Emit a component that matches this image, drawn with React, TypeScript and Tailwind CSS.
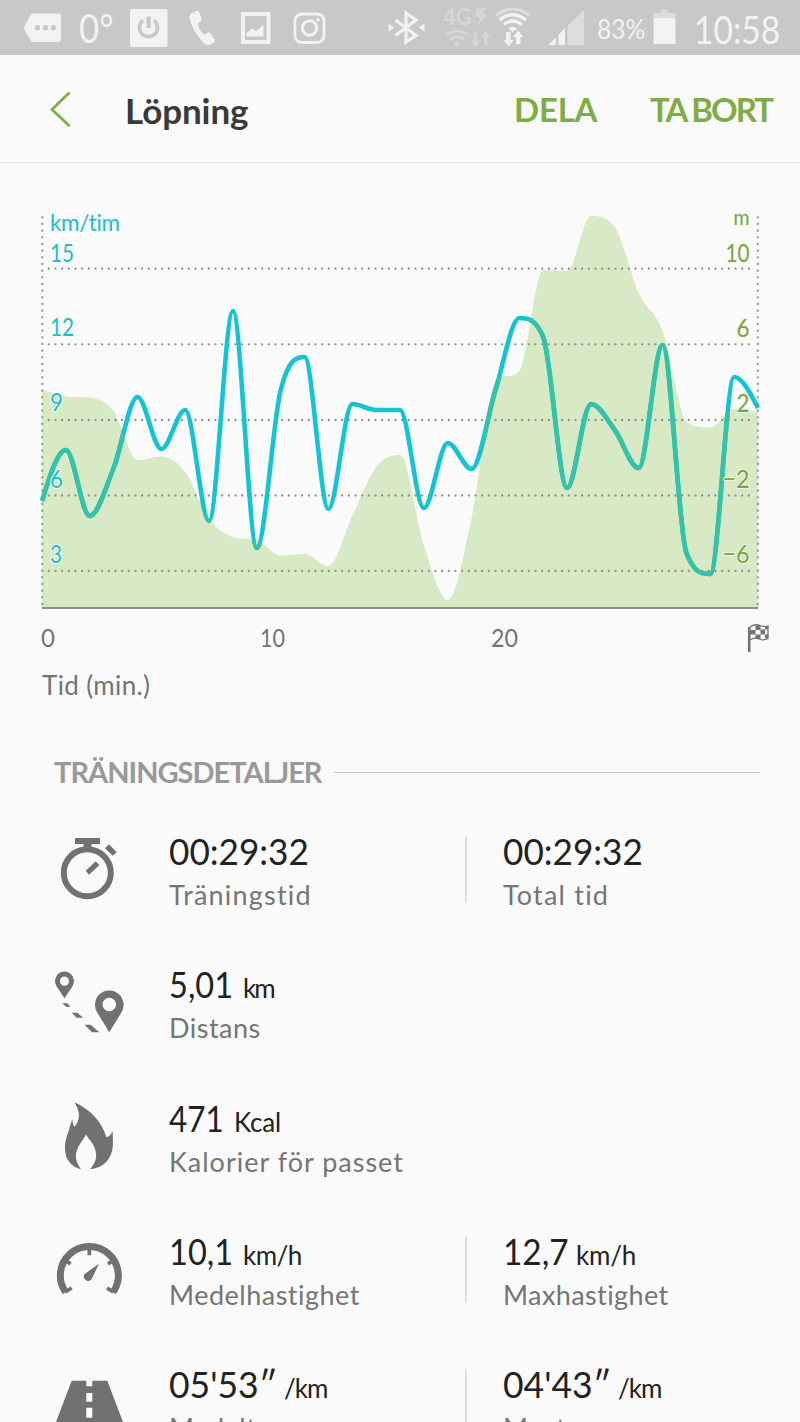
import type { ReactNode } from "react";

const STEP = 716 / 30;

// y positions, one sample per minute of the workout
const speed = [
  501, 450, 516, 468, 397, 449, 410, 521, 311, 548, 390, 357, 509, 404, 410, 410, 508, 443, 469, 390, 318, 337, 488,
  404, 430, 468, 345, 553, 574, 377, 408,
];
const elevation = [
  389, 396.5, 397.5, 411, 460, 456.5, 472, 519, 537, 540, 555.5, 554, 566, 516, 467, 455, 545, 600, 518, 381, 371,
  270, 271, 216, 227, 293, 331, 421, 427.5, 409, 412,
];

function smoothPath(ys: number[]) {
  const n = ys.length;
  const x = (i: number) => 42 + i * STEP;
  const s = ys.slice(1).map((y, i) => (y - ys[i]) / STEP);
  const t = ys.map((_, i) => {
    if (i === 0 || i === n - 1) return 0;
    const a = s[i - 1];
    const b = s[i];
    if (a * b <= 0) return 0;
    return Math.sign(a) * Math.min(3 * Math.abs(a), 3 * Math.abs(b), Math.abs(a + b) / 2);
  });
  t[0] = (3 * s[0] - t[1]) / 2;
  t[n - 1] = (3 * s[n - 2] - t[n - 2]) / 2;
  let d = `M${x(0)} ${ys[0]}`;
  for (let i = 1; i < n; i++) {
    const h = STEP / 3;
    d += `C${x(i - 1) + h} ${ys[i - 1] + t[i - 1] * h} ${x(i) - h} ${ys[i] - t[i] * h} ${x(i)} ${ys[i]}`;
  }
  return d;
}

const speedPath = smoothPath(speed);
const areaPath = `${smoothPath(elevation)}L758 608L42 608Z`;

const gridLines = [268.7, 344.3, 420, 495.5, 571];
const speedLabels = [
  { text: "15", y: 261.5, w: 24 },
  { text: "12", y: 336, w: 24 },
  { text: "9", y: 411, w: 13 },
  { text: "6", y: 487.5, w: 13 },
  { text: "3", y: 563, w: 12 },
];
const heightLabels = [
  { text: "10", y: 261.5, w: 24 },
  { text: "6", y: 336.5, w: 13 },
  { text: "2", y: 412, w: 13 },
  { text: "−2", y: 487.5, w: 27 },
  { text: "−6", y: 563, w: 27 },
];

function Chart() {
  return (
    <svg viewBox="0 163 800 557" className="block h-[557px] w-full shrink-0">
      <defs>
        <clipPath id="area">
          <path d={areaPath} />
        </clipPath>
      </defs>
      <path d={areaPath} fill="#d8e9c5" />
      <g stroke="#8f8f8f" strokeWidth="2.3" strokeLinecap="round" strokeDasharray="0 6.667">
        <path d="M42.3 217.3V607" />
        <path d="M757.8 217.3V607" />
        {gridLines.map((y) => (
          <path key={y} d={`M48.8 ${y}H750`} />
        ))}
      </g>
      <path d="M42 608H758" stroke="#8f8f8f" strokeWidth="2" />
      <g fill="none" strokeWidth="4.6">
        <path d={speedPath} stroke="#14c4d2" />
        <path d={speedPath} stroke="#36c2a6" clipPath="url(#area)" />
      </g>
      <g fill="#1fbccb" fontSize="25.5" stroke="#f4faf4" strokeWidth="2" strokeLinejoin="round" paintOrder="stroke">
        <text x="50" y="231" fontSize="22.5" textLength="70" className="[font-variant-ligatures:none]">km/tim</text>
        {speedLabels.map((l) => (
          <text key={l.text} x="50" y={l.y} textLength={l.w} lengthAdjust="spacingAndGlyphs">{l.text}</text>
        ))}
      </g>
      <g fill="#7ba544" fontSize="25.5" textAnchor="end" stroke="#eef5e4" strokeWidth="2" strokeLinejoin="round" paintOrder="stroke">
        <text x="749.5" y="224.5" fontSize="22" textLength="16" lengthAdjust="spacingAndGlyphs">m</text>
        {heightLabels.map((l) => (
          <text key={l.text} x="749.5" y={l.y} textLength={l.w} lengthAdjust="spacingAndGlyphs">{l.text}</text>
        ))}
      </g>
      <g fill="#747474" fontSize="25">
        <text x="41" y="647" textLength="14" lengthAdjust="spacingAndGlyphs">0</text>
        <text x="260" y="647" textLength="25" lengthAdjust="spacingAndGlyphs">10</text>
        <text x="491" y="647" textLength="27" lengthAdjust="spacingAndGlyphs">20</text>
        <text x="42" y="695" fontSize="26" textLength="108">Tid (min.)</text>
      </g>
      <g stroke="#747474" fill="none">
        <path d="M749.2 627V652" strokeWidth="2.6" />
        <path d="M750 627Q755 623.500 760 625.500T768 626V638.500Q764 641 759 639T750 640" strokeWidth="1.3" />
        <path d="M755.500 625.500h5v4.500h-5zM750 630h5.500v4.500H750zM760.500 629.500h4.500v5h-4.500zM755.500 634.500h5v4.500h-5zM765 626h3v3.500h-3zM765 634.500h3v4h-3z" fill="#747474" stroke="none" />
      </g>
    </svg>
  );
}

function StatusBar() {
  return (
    <div className="flex h-[55px] shrink-0 items-center overflow-hidden whitespace-nowrap bg-[#c8c8c8] text-[#f2f2f2]">
      <svg className="ml-6 h-[55px] w-[38px] shrink-0" viewBox="24 0 38 55" fill="currentColor">
        <path d="M33 13.500H59Q61 13.500 61 15.500V40Q61 42 59 42H33Q31.500 42 30.500 40.500L24.500 30Q23.500 28 24.500 26L30.500 15Q31.500 13.500 33 13.500Z" />
        <g fill="#c8c8c8">
          <circle cx="37.500" cy="27.700" r="2.600" />
          <circle cx="45.500" cy="27.700" r="2.600" />
          <circle cx="53.300" cy="27.700" r="2.600" />
        </g>
      </svg>
      <div className="ml-[17px] w-[38px] shrink-0 origin-left scale-x-[0.87] text-[40px]">0°</div>
      <svg className="ml-[13px] h-[55px] w-[38px] shrink-0" viewBox="130 0 38 55">
        <rect x="130" y="9" width="37.500" height="38" rx="2" fill="currentColor" />
        <g fill="none" stroke="#c8c8c8" strokeWidth="3.600">
          <path d="M143 20.500A9 9 0 1 0 154 20.500" />
          <path d="M148.600 16.500V28" strokeWidth="4.200" />
        </g>
      </svg>
      <svg className="ml-[21px] h-[55px] w-[27px] shrink-0" viewBox="189 0 27 55" fill="currentColor">
        <path d="M190.500 14L196 11Q198 10 199 12L201.500 18.500Q202 20 200.500 21.500L197.500 24Q199 30 204 34.500L207.500 33Q209.500 32 210.500 33.500L214.500 39Q215.500 41 214 42.500L209.500 45Q206 46 202 41Q191.500 29 189.500 17.500Q189.300 15 190.500 14Z" />
      </svg>
      <svg className="ml-6 h-[55px] w-[32px] shrink-0" viewBox="240 0 32 55">
        <rect x="243" y="14" width="25.500" height="28" fill="none" stroke="currentColor" strokeWidth="4" />
        <path d="M246.500 36.500V33L252 28.500L256 31L263.500 25V36.500Z" fill="currentColor" />
      </svg>
      <svg className="ml-[21px] h-[55px] w-[33px] shrink-0" viewBox="292.500 0 33 55" fill="none" stroke="currentColor">
        <rect x="294.500" y="14" width="29" height="28.500" rx="7" strokeWidth="2.800" />
        <circle cx="309" cy="28" r="7.200" strokeWidth="3" />
        <circle cx="317.500" cy="19.800" r="1.900" fill="currentColor" stroke="none" />
      </svg>
      <svg className="ml-[62px] h-[55px] w-[37px] shrink-0" viewBox="387.500 0 37 55">
        <path d="M395 20L415.500 35.500L405.500 42V13L415.500 20L395 35.500" fill="none" stroke="currentColor" strokeWidth="3.200" />
        <path d="M388 23.500L393.500 27.500L388 31.500ZM424 23.500L418.500 27.500L424 31.500Z" fill="currentColor" />
      </svg>
      <div className="ml-[18px] h-[46px] w-[48px] shrink-0 text-[#d6d6d6]">
        <div className="flex h-[24px] items-center text-[22px] font-bold">
          4G
          <svg className="h-5 w-4" viewBox="0 0 16 20" fill="currentColor">
            <path d="M5 1H15L10 7H15L6 19L8 10H3Z" />
          </svg>
        </div>
        <svg className="h-[20px] w-[48px]" viewBox="443 27 48 20">
          <g fill="none" stroke="currentColor" strokeWidth="2.300">
            <path d="M446 33Q457 25.500 468 33" />
            <path d="M449.500 37.500Q457 32 464.500 37.500" />
          </g>
          <path d="M453.500 41Q457 38 460.500 41L457 45ZM473.500 30H477V39H480L475.300 45L470.500 39H473.500ZM484 43V35H481L485.500 29.500L490.500 35H487.500V43Z" fill="currentColor" />
        </svg>
      </div>
      <svg className="ml-1 h-[55px] w-[37px] shrink-0" viewBox="495 0 37 55" fill="none" stroke="currentColor">
        <path d="M496 15.500Q512.500 2.500 529.500 15.500" strokeWidth="3" stroke="#dddddd" />
        <path d="M499.500 20Q512.500 9.500 526 20" strokeWidth="3.200" />
        <path d="M504 24.500Q512.500 17.500 522 24.500" strokeWidth="3.200" />
        <path d="M508 28.500Q512.500 25 517.500 28.500L512.800 32Z" fill="currentColor" stroke="none" />
        <path d="M506 32H510.500V40H513.500L508.700 46.500L503.500 40H506ZM516 44V37H513L518.300 30.500L523.500 37H520.500V44Z" fill="currentColor" stroke="none" />
      </svg>
      <svg className="ml-4 h-[55px] w-[37px] shrink-0" viewBox="548 0 37 55" fill="currentColor">
        <path d="M548 45L556 37.500V45Z" />
        <path d="M558.500 35L565 28V45H558.500Z" />
        <path d="M567.500 26L584 10V45H567.500Z" fill="#dcdcdc" />
      </svg>
      <div className="ml-3 w-[49px] shrink-0 origin-left scale-x-[0.91] pt-1 text-[27px]">83%</div>
      <svg className="ml-[7px] h-[55px] w-[23px] shrink-0" viewBox="653 0 23 55">
        <path d="M661 10H668V13H675.500V18H653.500V13H661Z" fill="#dcdcdc" />
        <rect x="653.500" y="18" width="22" height="26" fill="currentColor" />
      </svg>
      <div className="ml-[18px] w-[84px] shrink-0 origin-left scale-x-[0.86] pt-1 text-[39px]">10:58</div>
    </div>
  );
}

function Header() {
  return (
    <div className="flex h-[108px] shrink-0 items-center border-b border-[#e4e4e4] pl-[49px] font-bold whitespace-nowrap">
      <svg className="h-9 w-6 shrink-0" viewBox="0 0 24 36" fill="none" stroke="#7cb04a" strokeWidth="2.800">
        <path d="M20.500 1.500L3 18.500L20.500 35" />
      </svg>
      <div className="ml-[52px] w-[389px] pt-[3px] text-[35px] tracking-[-0.1px] text-[#3a3a3a]">Löpning</div>
      <button className="w-[136px] pt-[3px] text-left text-[33px] tracking-[-0.2px] text-[#7fad44]">DELA</button>
      <button className="pt-[3px] text-[33px] tracking-[-2px] text-[#7fad44]">TA BORT</button>
    </div>
  );
}

const TimerIcon = () => (
  <svg className="h-full w-20" viewBox="48 803 80 133.330" fill="#727072">
    <circle cx="87.300" cy="872.700" r="23.500" fill="none" stroke="#727072" strokeWidth="6" />
    <path d="M75 838H100V844H91.500V849H83.500V844H75Z" />
    <path d="M105 848.300L109 844.300L116.700 852.300L112.700 855.700ZM85.700 870.700L95.700 861.300L99.300 865.300L89 874.700Z" />
  </svg>
);

const RouteIcon = () => (
  <svg className="h-full w-20" viewBox="48 936.330 80 133.330" fill="#727072">
    <path fillRule="evenodd" d="M64.500 998.500L56.500 986.500A9.500 9.500 0 1 1 72.500 986.500ZM64.500 976.900A4.600 4.600 0 1 0 64.500 986.100A4.600 4.600 0 1 0 64.500 976.900Z" />
    <path fillRule="evenodd" d="M109.300 1032.500L97.200 1012.800A14.300 14.300 0 1 1 121.400 1012.800ZM109.300 998A6.800 6.800 0 1 0 109.300 1011.600A6.800 6.800 0 1 0 109.300 998Z" />
    <path d="M62.300 1003.700H67.300L70.700 1007H66ZM71.700 1013H77.300L83.300 1018H76.700ZM84.700 1025H90.700L99.300 1032.700H92Z" />
  </svg>
);

const FlameIcon = () => (
  <svg className="h-full w-20" viewBox="48 1069.670 80 133.330" fill="#727072">
    <g transform="translate(30 1080) scale(0.3333)">
      <path d="M133 66C175 85 215 120 229 171Q242 168 248 151C248 172 251 190 247 208C239 243 218 262 180 267C205 238 201 217 190 194C181 179 172 172 168 162C163 174 155 183 148 194C135 216 132 238 153 267C121 258 106 237 105 207C104 178 115 157 118 145Q121 132 127 117Q127 130 133 140C152 118 151 94 133 66Z" />
    </g>
  </svg>
);

const GaugeIcon = () => (
  <svg className="h-full w-20" viewBox="48 1203 80 133.330">
    <g transform="translate(30 1080) scale(0.3333)" fill="none" stroke="#727072">
      <path d="M107 637A87 87 0 1 1 249 637" strokeWidth="21" />
      <path d="M178 508V526M106 541L122 552M250 541L234 552M106 636L125 624M250 636L231 624" strokeWidth="11" />
      <path d="M207 551L187 593A13 13 0 1 1 164 582Z" fill="#727072" stroke="none" />
    </g>
  </svg>
);

const RoadIcon = () => (
  <svg className="h-full w-20" viewBox="48 1336.330 80 133.330" fill="#727072">
    <path d="M71.700 1381H86.300V1386.700H92.300V1381H107.300L132 1446H47Z" />
    <path d="M86.300 1393.300H92.300V1402H86.300ZM86.300 1408H92.300V1418H86.300Z" fill="#fafafa" />
  </svg>
);

interface Metric {
  value: string;
  unit?: string;
  label: string;
  valueClass: string;
  unitClass?: string;
  labelClass: string;
}

function MetricText({ m }: { m: Metric }) {
  return (
    <div className="pt-[25px] whitespace-nowrap">
      <div className="flex h-[46px] items-baseline text-[37px] leading-[46px] text-[#222]">
        <span className={`origin-left ${m.valueClass}`}>{m.value}</span>
        {m.unit && <span className={`text-[26px] ${m.unitClass}`}>{m.unit}</span>}
      </div>
      <div className={`text-[27px] leading-[42px] text-[#757575] ${m.labelClass}`}>{m.label}</div>
    </div>
  );
}

function Row({ icon, left, right }: { icon: ReactNode; left: Metric; right?: Metric }) {
  return (
    <div className="flex h-[133.33px] shrink-0 pl-12">
      {icon}
      <div className="ml-[41px] w-[296px]">
        <MetricText m={left} />
      </div>
      {right && (
        <>
          <div className="mt-[33px] mr-9 h-[66px] w-[2px] bg-[#e0e0e0]" />
          <MetricText m={right} />
        </>
      )}
    </div>
  );
}

const rows: { icon: ReactNode; left: Metric; right?: Metric }[] = [
  {
    icon: <TimerIcon />,
    left: { value: "00:29:32", label: "Träningstid", valueClass: "scale-x-[0.95]", labelClass: "tracking-[1.2px]" },
    right: { value: "00:29:32", label: "Total tid", valueClass: "scale-x-[0.95]", labelClass: "tracking-[1.2px]" },
  },
  {
    icon: <RouteIcon />,
    left: { value: "5,01", unit: "km", label: "Distans", valueClass: "w-[74px] scale-x-[0.88]", unitClass: "tracking-[-2px]", labelClass: "tracking-[0.5px]" },
  },
  {
    icon: <FlameIcon />,
    left: { value: "471", unit: "Kcal", label: "Kalorier för passet", valueClass: "w-[65px] scale-x-[0.85]", unitClass: "tracking-[-0.2px]", labelClass: "tracking-[1px]" },
  },
  {
    icon: <GaugeIcon />,
    left: { value: "10,1", unit: "km/h", label: "Medelhastighet", valueClass: "w-[74px] scale-x-[0.88]", unitClass: "tracking-[-0.5px]", labelClass: "tracking-[0.5px]" },
    right: { value: "12,7", unit: "km/h", label: "Maxhastighet", valueClass: "w-[73px] scale-x-[0.9]", unitClass: "tracking-[-0.2px]", labelClass: "tracking-[0.4px]" },
  },
  {
    icon: <RoadIcon />,
    left: { value: "05'53″", unit: "/km", label: "Medeltempo", valueClass: "w-[115px] scale-x-[0.96]", unitClass: "tracking-[-1px]", labelClass: "tracking-[0.5px]" },
    right: { value: "04'43″", unit: "/km", label: "Maxtempo", valueClass: "w-[115px] scale-x-[0.96]", unitClass: "tracking-[-1px]", labelClass: "tracking-[0.5px]" },
  },
];

export default function App() {
  return (
    <div className="flex h-[1422px] w-[800px] flex-col overflow-hidden bg-[#fafafa] font-[Lato,sans-serif]">
      <StatusBar />
      <Header />
      <Chart />
      <div className="flex h-[83px] shrink-0 items-center pt-[21px] pr-10 pl-[54px]">
        <h2 className="w-[280px] text-[29px] font-bold tracking-[-1px] whitespace-nowrap text-[#999]">TRÄNINGSDETALJER</h2>
        <div className="h-px flex-1 bg-[#cbcbcb]" />
      </div>
      {rows.map((r) => (
        <Row key={r.left.label} {...r} />
      ))}
    </div>
  );
}
